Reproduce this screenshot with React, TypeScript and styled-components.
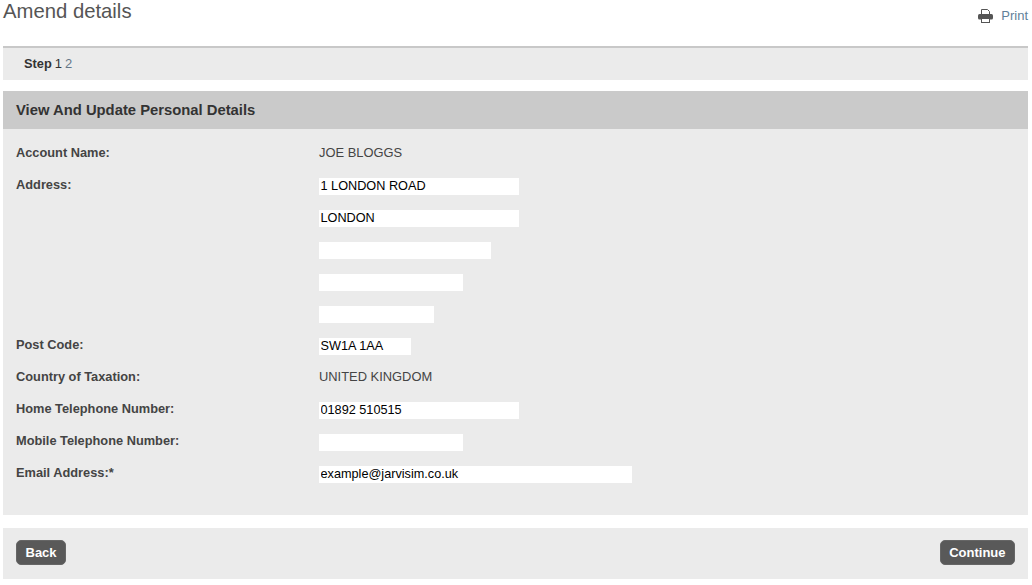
import React from 'react';
import styled, { createGlobalStyle } from 'styled-components';

const GlobalStyle = createGlobalStyle`
  html, body {
    margin: 0;
    padding: 0;
    background: #fff;
  }
  body {
    font-family: "Liberation Sans", Arial, sans-serif;
    font-size: 13px;
    color: #444;
  }
`;

const Page = styled.div`
  width: 1032px;
  height: 585px;
  box-sizing: border-box;
  padding: 0 4px 0 3px;
  overflow: hidden;
`;

const TitleBar = styled.div`
  height: 46px;
  display: flex;
  justify-content: space-between;
  align-items: flex-start;
`;

const Title = styled.h1`
  margin: 0;
  font-size: 20.3px;
  line-height: 23px;
  font-weight: 400;
  color: #555;
`;

const PrintLink = styled.a`
  display: flex;
  align-items: center;
  gap: 8px;
  margin-top: 8px;
  color: #5f7f99;
  font-size: 13px;
  line-height: 15px;
`;

const Steps = styled.div`
  height: 34px;
  box-sizing: border-box;
  border-top: 2px solid #c8c8c8;
  background: #ebebeb;
  padding: 0 0 2px 21px;
  display: flex;
  align-items: center;
  gap: 3px;
  font-size: 13px;
  margin-bottom: 11px;
`;

const StepLabel = styled.strong`
  color: #333;
  font-size: 12.8px;
`;

const StepNumber = styled.span<{ $current?: boolean }>`
  color: ${(p) => (p.$current ? '#333' : '#667788')};
`;

const Panel = styled.section`
  background: #ebebeb;
  margin-bottom: 13px;
`;

const PanelHeading = styled.h2`
  margin: 0;
  height: 38px;
  box-sizing: border-box;
  padding: 0 13px;
  background: #cacaca;
  color: #333;
  font-size: 14.8px;
  line-height: 38px;
  font-weight: 700;
`;

const Form = styled.div`
  padding: 7px 13px 27px;
`;

const Row = styled.div`
  display: grid;
  grid-template-columns: 303px 1fr;
  height: 32px;
  align-items: center;
`;

const Label = styled.label`
  font-size: 12.8px;
  font-weight: 700;
  color: #444;
  line-height: 14px;
  margin-top: 2px;
`;

const Value = styled.span`
  font-size: 12.9px;
  color: #444;
  line-height: 14px;
  margin-top: 2px;
`;

const Input = styled.input<{ $width: number }>`
  display: block;
  width: ${(p) => p.$width}px;
  height: 17px;
  box-sizing: border-box;
  border: 0;
  padding: 0 2px 1px 1.5px;
  margin-top: 5px;
  background: #fff;
  color: #000;
  font-family: "Liberation Sans", Arial, sans-serif;
  font-size: 12.7px;
  outline: none;
`;

const Footer = styled.div`
  height: 51px;
  box-sizing: border-box;
  padding: 12px 13px 0;
  background: #ebebeb;
  display: flex;
  justify-content: space-between;
  align-items: flex-start;
`;

const Button = styled.button`
  height: 25px;
  box-sizing: border-box;
  border: 1px solid #666;
  border-radius: 5px;
  padding: 0 8.5px;
  background: #595959;
  color: #fff;
  font-family: "Liberation Sans", Arial, sans-serif;
  font-size: 13px;
  font-weight: 700;
`;

const PrintIcon = () => (
  <svg width="15" height="14" viewBox="0 0 15 14" aria-hidden="true">
    <path d="M3.5 6.5V.5h6l2 2v4" fill="#fff" stroke="#555" />
    <rect x="0" y="5" width="15" height="5.5" rx="1.5" fill="#555" />
    <rect x="3.5" y="9.5" width="8" height="4" fill="#fff" stroke="#555" />
  </svg>
);

const App: React.FC = () => {
  return (
    <Page>
      <GlobalStyle />
      <TitleBar>
        <Title>Amend details</Title>
        <PrintLink>
          <PrintIcon />
          Print
        </PrintLink>
      </TitleBar>
      <Steps>
        <StepLabel>Step</StepLabel>
        <StepNumber $current>1</StepNumber>
        <StepNumber>2</StepNumber>
      </Steps>
      <Panel>
        <PanelHeading>View And Update Personal Details</PanelHeading>
        <Form>
          <Row>
            <Label>Account Name:</Label>
            <Value>JOE BLOGGS</Value>
          </Row>
          <Row>
            <Label>Address:</Label>
            <Input $width={200} defaultValue="1 LONDON ROAD" />
          </Row>
          <Row>
            <span />
            <Input $width={200} defaultValue="LONDON" />
          </Row>
          <Row>
            <span />
            <Input $width={172} />
          </Row>
          <Row>
            <span />
            <Input $width={144} />
          </Row>
          <Row>
            <span />
            <Input $width={115} />
          </Row>
          <Row>
            <Label>Post Code:</Label>
            <Input $width={92} defaultValue="SW1A 1AA" />
          </Row>
          <Row>
            <Label>Country of Taxation:</Label>
            <Value>UNITED KINGDOM</Value>
          </Row>
          <Row>
            <Label>Home Telephone Number:</Label>
            <Input $width={200} defaultValue="01892 510515" />
          </Row>
          <Row>
            <Label>Mobile Telephone Number:</Label>
            <Input $width={144} />
          </Row>
          <Row>
            <Label>Email Address:*</Label>
            <Input $width={313} defaultValue="example@jarvisim.co.uk" />
          </Row>
        </Form>
      </Panel>
      <Footer>
        <Button>Back</Button>
        <Button>Continue</Button>
      </Footer>
    </Page>
  );
};

export default App;
